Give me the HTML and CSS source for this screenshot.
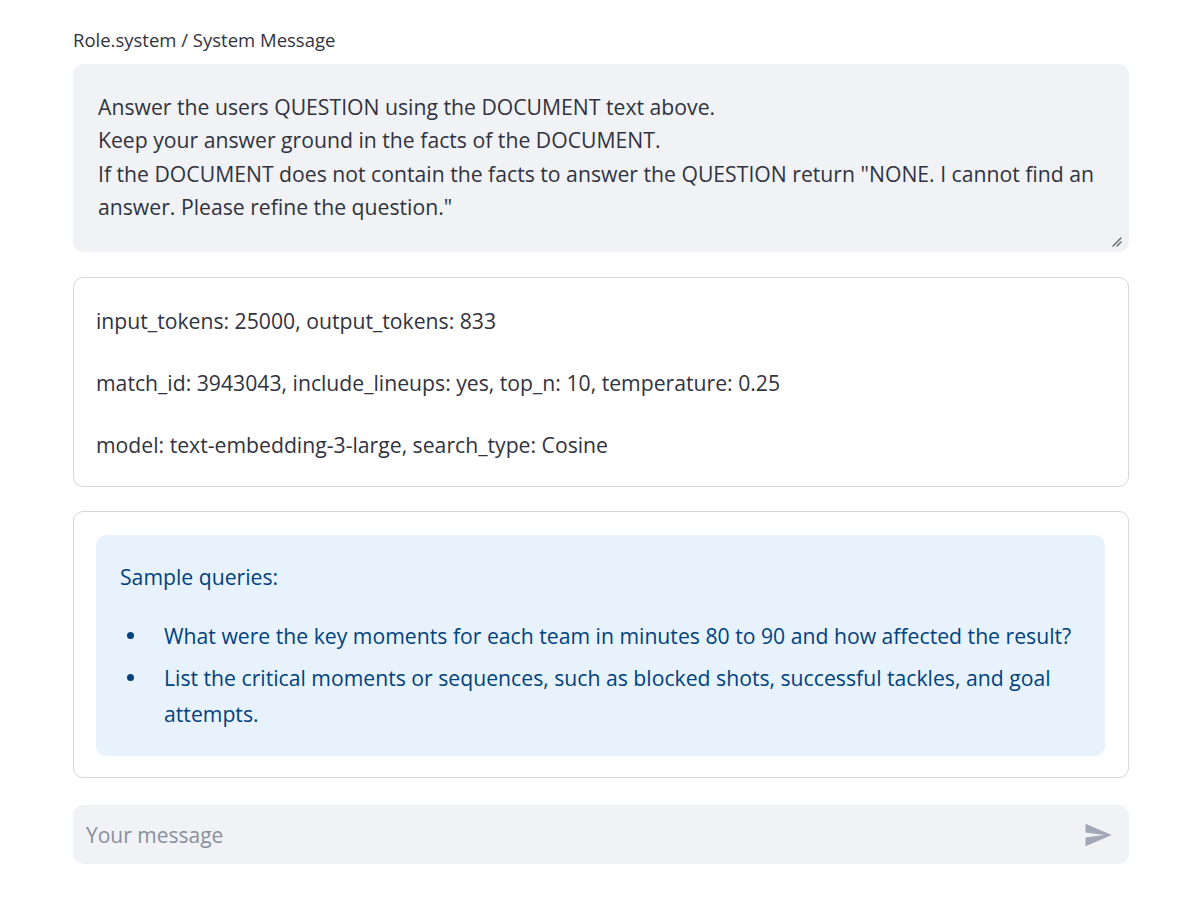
FILE: index.html
```html
<!DOCTYPE html>
<html>
<head>
<meta charset="utf-8">
<link rel="stylesheet" href="styles.css">
</head>
<body>
<main class="page">
  <div class="label">Role.system / System Message</div>
  <div class="textarea">
    <div class="ta-text">Answer the users QUESTION using the DOCUMENT text above.<br>Keep your answer ground in the facts of the DOCUMENT.<br>If the DOCUMENT does not contain the facts to answer the QUESTION return "NONE. I cannot find an answer. Please refine the question."</div>
    <svg class="grip" width="12" height="12" viewBox="0 0 12 12"><path d="M2 10 L10 2 M6 10 L10 6" stroke="#6b6d75" stroke-width="1.5" fill="none" stroke-linecap="round"/></svg>
  </div>
  <div class="card card-info">
    <p>input_tokens: 25000, output_tokens: 833</p>
    <p>match_id: 3943043, include_lineups: yes, top_n: 10, temperature: 0.25</p>
    <p>model: text-embedding-3-large, search_type: Cosine</p>
  </div>
  <div class="card card-samples">
    <div class="alert">
      <div class="alert-title">Sample queries:</div>
      <ul class="queries">
        <li>What were the key moments for each team in minutes 80 to 90 and how affected the result?</li>
        <li>List the critical moments or sequences, such as blocked shots, successful tackles, and goal attempts.</li>
      </ul>
    </div>
  </div>
  <div class="chat">
    <span class="placeholder">Your message</span>
    <svg class="send" width="30" height="28" viewBox="0 1 24 22"><path d="M2.01 21L23 12 2.01 3 2 10l15 2-15 2z" fill="#a3a8b8"/></svg>
  </div>
</main>
</body>
</html>
```

FILE: styles.css
```css
* { box-sizing: border-box; }
body {
  margin: 0;
  background: #ffffff;
  font-family: "Source Sans Pro", "Open Sans", "Liberation Sans", sans-serif;
  color: #31333f;
}
.page {
  width: 1056px;
  margin-left: 73px;
  padding-top: 28px;
  display: flex;
  flex-direction: column;
}
.label {
  font-size: 18.5px;
  line-height: 24px;
  height: 24px;
  margin-bottom: 12px;
}
.textarea {
  position: relative;
  height: 188px;
  background: #f0f2f6;
  border-radius: 10px;
  padding: 26px 25px 0 25px;
  font-size: 21.2px;
  line-height: 33.3px;
}
.grip {
  position: absolute;
  right: 6px;
  bottom: 4px;
}
.card {
  border: 1px solid #d5d6d9;
  border-radius: 10px;
}
.card-info {
  margin-top: 25px;
  height: 210px;
  padding: 26px 22px 0 22px;
  font-size: 21.2px;
  line-height: 33px;
}
.card-info p {
  margin: 0 0 29px 0;
}
.card-samples {
  margin-top: 24px;
  height: 267px;
  padding: 23px 23px 0 22px;
}
.alert {
  background: #e8f2fc;
  border-radius: 10px;
  height: 221px;
  padding: 24px 24px 0 24px;
  color: #004280;
  font-size: 21.2px;
  line-height: 36px;
}
.queries {
  list-style: none;
  margin: 23px 0 0 0;
  padding: 0;
  display: flex;
  flex-direction: column;
  gap: 6px;
}
.queries li {
  position: relative;
  padding-left: 44px;
}
.queries li::before {
  content: "";
  position: absolute;
  left: 7px;
  top: 14px;
  width: 7px;
  height: 7px;
  border-radius: 50%;
  background: #004280;
}
.chat {
  margin-top: 27px;
  height: 59px;
  background: #f0f2f6;
  border-radius: 10px;
  display: flex;
  align-items: center;
  justify-content: space-between;
  padding: 0 16px 0 13px;
}
.placeholder {
  font-size: 21px;
  color: #8b8f9c;
}
.send {
  display: block;
}
```
